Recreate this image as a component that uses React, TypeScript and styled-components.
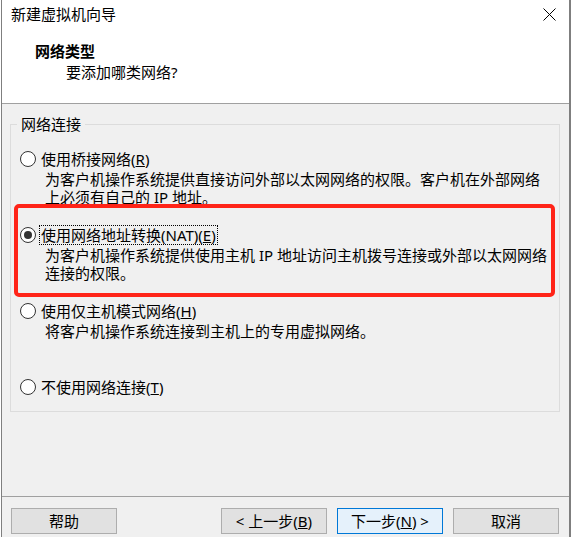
import React from "react";
import styled, { createGlobalStyle } from "styled-components";

const GlobalStyle = createGlobalStyle`
  html, body {
    margin: 0;
    padding: 0;
    background: #ffffff;
  }
  * {
    box-sizing: border-box;
  }
  body {
    font-family: "Noto Sans", "Noto Sans CJK SC", sans-serif;
    font-size: 15px;
    color: #000000;
  }
`;

interface NetworkOption {
  id: string;
  label: string;
  key: string;
  description?: string[];
}

const options: NetworkOption[] = [
  {
    id: "bridged",
    label: "使用桥接网络",
    key: "R",
    description: [
      "为客户机操作系统提供直接访问外部以太网网络的权限。客户机在外部网络",
      "上必须有自己的 IP 地址。",
    ],
  },
  {
    id: "nat",
    label: "使用网络地址转换(NAT)",
    key: "E",
    description: [
      "为客户机操作系统提供使用主机 IP 地址访问主机拨号连接或外部以太网网络",
      "连接的权限。",
    ],
  },
  {
    id: "hostonly",
    label: "使用仅主机模式网络",
    key: "H",
    description: ["将客户机操作系统连接到主机上的专用虚拟网络。"],
  },
  {
    id: "none",
    label: "不使用网络连接",
    key: "T",
  },
];

export default function App() {
  const selected = "nat";

  return (
    <>
      <GlobalStyle />
      <Window>
        <Header>
          <TitleRow>
            <WindowTitle>新建虚拟机向导</WindowTitle>
            <CloseButton aria-label="关闭">
              <svg width="13" height="13" viewBox="0 0 13 13">
                <path d="M0.5 0.5 L12.5 12.5 M12.5 0.5 L0.5 12.5" stroke="#000" strokeWidth="1" fill="none" />
              </svg>
            </CloseButton>
          </TitleRow>
          <PageTitle>网络类型</PageTitle>
          <PageSubtitle>要添加哪类网络?</PageSubtitle>
        </Header>

        <Body>
          <GroupBox>
            <Legend>网络连接</Legend>
            <OptionList>
              {options.map((opt) => {
                const checked = opt.id === selected;
                return (
                  <Option key={opt.id}>
                    {checked && <Highlight />}
                    <OptionRow>
                      <Radio checked={checked} />
                      <OptionLabel focused={checked}>
                        {opt.label}(<u>{opt.key}</u>)
                      </OptionLabel>
                    </OptionRow>
                    {opt.description && (
                      <Description>
                        {opt.description.map((line) => (
                          <DescLine key={line}>{line}</DescLine>
                        ))}
                      </Description>
                    )}
                  </Option>
                );
              })}
            </OptionList>
          </GroupBox>
        </Body>

        <Footer>
          <Button>帮助</Button>
          <Spacer />
          <Button>
            &lt; 上一步(<u>B</u>)
          </Button>
          <Button isDefault>
            下一步(<u>N</u>) &gt;
          </Button>
          <Button>取消</Button>
        </Footer>
      </Window>
    </>
  );
}

const Window = styled.div`
  margin-left: 1px;
  width: 570px;
  height: 537px;
  border-left: 1px solid #7f7f7f;
  border-right: 2px solid #7f7f7f;
  display: flex;
  flex-direction: column;
  background: #f0f0f0;
`;

const Header = styled.div`
  height: 104px;
  background: #ffffff;
  border-bottom: 1px solid #a0a0a0;
`;

const TitleRow = styled.div`
  height: 28px;
  display: flex;
  align-items: center;
  justify-content: space-between;
  padding: 0 13px 0 9px;
`;

const WindowTitle = styled.div`
  line-height: 20px;
`;

const CloseButton = styled.div`
  width: 13px;
  height: 13px;
  display: flex;
  svg {
    display: block;
  }
`;

const PageTitle = styled.div`
  margin-top: 13px;
  padding-left: 33px;
  line-height: 20px;
  font-weight: bold;
`;

const PageSubtitle = styled.div`
  margin-top: 1px;
  padding-left: 64px;
  line-height: 20px;
`;

const Body = styled.div`
  flex: 1;
  padding: 10px 9px 0 8px;
`;

const GroupBox = styled.fieldset`
  margin: 0;
  width: 550px;
  border: 1px solid #dcdcdc;
  padding: 15px 9px 14px 9px;
`;

const Legend = styled.legend`
  padding: 0 4px;
  margin-left: -3px;
  line-height: 20px;
`;

const OptionList = styled.div`
  display: grid;
  grid-template-rows: repeat(3, 76px) auto;
`;

const Option = styled.div`
  position: relative;
`;

const Highlight = styled.div`
  position: absolute;
  top: -21px;
  left: -6px;
  right: -5px;
  bottom: 4px;
  border: 4px solid #ff2418;
  border-radius: 5px;
  pointer-events: none;
`;

const OptionRow = styled.div`
  height: 20px;
  display: flex;
  align-items: center;
  gap: 3px;
`;

const Radio = styled.span<{ checked?: boolean }>`
  width: 16px;
  height: 16px;
  border-radius: 50%;
  border: 1px solid #333333;
  background: #ffffff;
  display: flex;
  align-items: center;
  justify-content: center;
  flex-shrink: 0;
  &::after {
    content: "";
    width: 8px;
    height: 8px;
    border-radius: 50%;
    background: ${(p) => (p.checked ? "#333333" : "transparent")};
  }
`;

const OptionLabel = styled.span<{ focused?: boolean }>`
  line-height: 18px;
  padding: 0 1px;
  border: 1px dotted ${(p) => (p.focused ? "#000000" : "transparent")};
  white-space: nowrap;
`;

const Description = styled.div`
  margin-top: 1px;
  padding-left: 25px;
  white-space: nowrap;
`;

const DescLine = styled.div`
  height: 18px;
  line-height: 18px;
`;

const Footer = styled.div`
  height: 41px;
  border-top: 1px solid #a0a0a0;
  padding: 11px 10px 0 9px;
  display: flex;
  align-items: flex-start;
  gap: 10px;
`;

const Spacer = styled.div`
  flex: 1;
`;

const Button = styled.div<{ isDefault?: boolean }>`
  width: 106px;
  height: 26px;
  border: 1px solid ${(p) => (p.isDefault ? "#0078d7" : "#adadad")};
  background: ${(p) => (p.isDefault ? "#e5f1fb" : "#e1e1e1")};
  display: flex;
  align-items: center;
  justify-content: center;
  line-height: 20px;
  white-space: nowrap;
`;
